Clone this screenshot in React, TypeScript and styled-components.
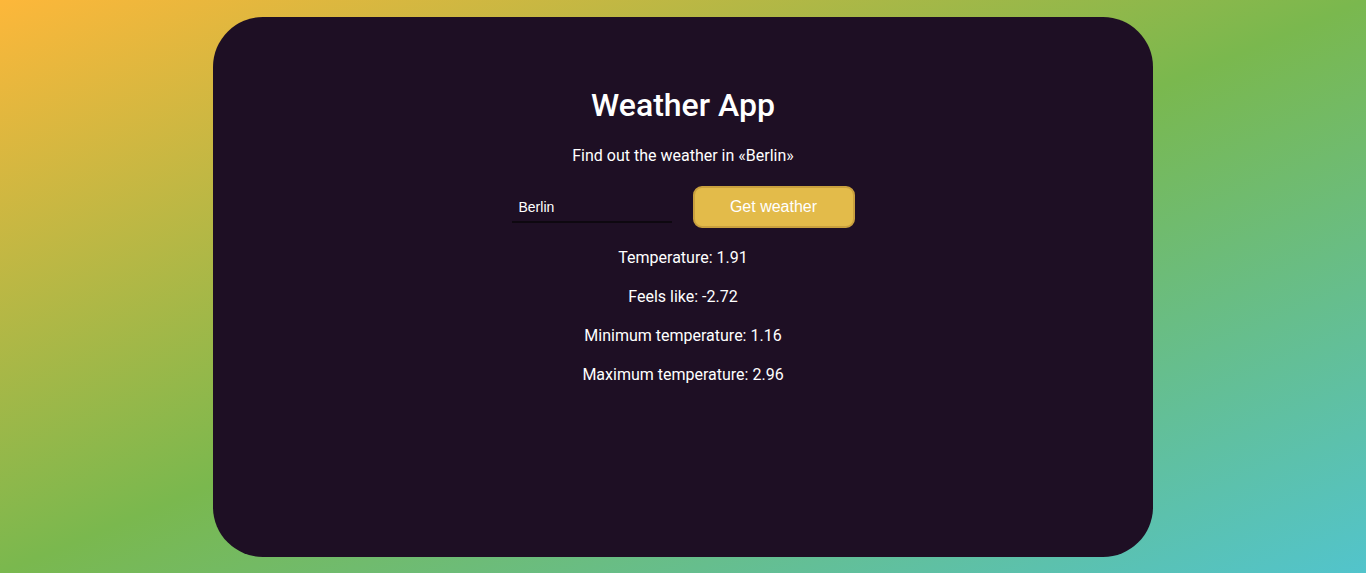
import React from 'react';
import styled, { createGlobalStyle } from 'styled-components';

const GlobalStyle = createGlobalStyle`
  html, body {
    margin: 0;
    padding: 0;
    height: 100%;
  }
  body {
    background: linear-gradient(to bottom right, #fdb73a 0%, #7ab84e 50%, #52c4cc 100%);
    font-family: Roboto, 'Liberation Sans', sans-serif;
  }
`;

const Page = styled.div`
  height: 573px;
  padding: 17px 0 16px;
  box-sizing: border-box;
  display: flex;
  justify-content: center;
`;

const Card = styled.main`
  width: 940px;
  height: 540px;
  border-radius: 50px;
  background: #1e0f24;
  display: flex;
  flex-direction: column;
  align-items: center;
  padding-top: 70px;
  box-sizing: border-box;
  color: #ffffff;
`;

const Title = styled.h1`
  margin: 0;
  font-size: 32px;
  font-weight: 500;
  line-height: 37px;
`;

const Subtitle = styled.p`
  margin: 22px 0 0;
  font-size: 16px;
  line-height: 19px;
`;

const Form = styled.form`
  margin-top: 21px;
  display: flex;
  align-items: center;
  gap: 21px;
`;

const CityInput = styled.input`
  width: 160px;
  height: 30px;
  box-sizing: border-box;
  padding: 0 7px;
  margin-top: 2px;
  background: transparent;
  border: none;
  border-bottom: 2px solid #0e0810;
  color: #ffffff;
  font-family: 'Liberation Sans', Arial, sans-serif;
  font-size: 14px;
  outline: none;
`;

const SubmitButton = styled.button`
  width: 162px;
  height: 42px;
  border-radius: 9px;
  border: 2px solid #c9a03e;
  background: #e3bb4a;
  color: #ffffff;
  font-family: 'Liberation Sans', Arial, sans-serif;
  font-size: 16px;
  cursor: pointer;
`;

const Results = styled.div`
  margin-top: 20px;
  display: flex;
  flex-direction: column;
  align-items: center;
  gap: 20px;
`;

const Line = styled.p`
  margin: 0;
  font-size: 16px;
  line-height: 19px;
`;

const weather = [
  { label: 'Temperature', value: 1.91 },
  { label: 'Feels like', value: -2.72 },
  { label: 'Minimum temperature', value: 1.16 },
  { label: 'Maximum temperature', value: 2.96 },
];

export default function App() {
  const city = 'Berlin';
  return (
    <>
      <GlobalStyle />
      <Page>
        <Card>
          <Title>Weather App</Title>
          <Subtitle>Find out the weather in «{city}»</Subtitle>
          <Form onSubmit={(e) => e.preventDefault()}>
            <CityInput type="text" defaultValue={city} />
            <SubmitButton type="submit">Get weather</SubmitButton>
          </Form>
          <Results>
            {weather.map((w) => (
              <Line key={w.label}>
                {w.label}: {w.value}
              </Line>
            ))}
          </Results>
        </Card>
      </Page>
    </>
  );
}
